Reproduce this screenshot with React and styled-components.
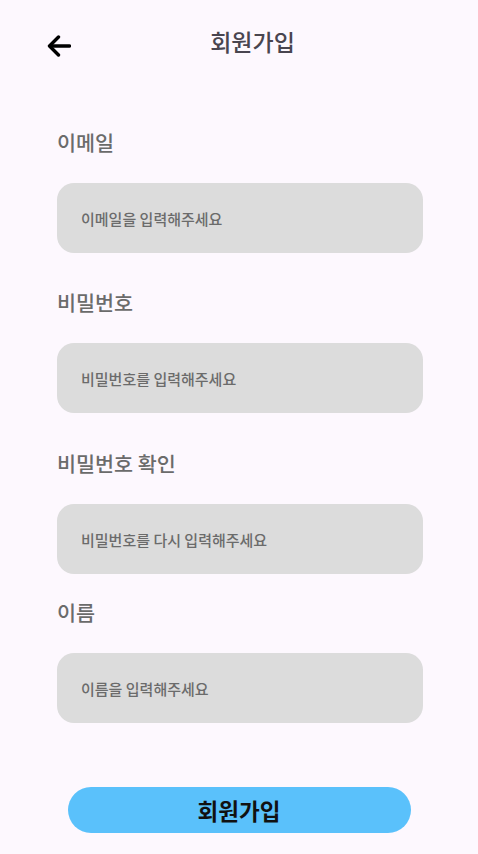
import React from 'react';
import styled, { createGlobalStyle } from 'styled-components';

const GlobalStyle = createGlobalStyle`
  html, body {
    margin: 0;
    padding: 0;
    background: #fdf8fe;
  }
  body {
    font-family: "Noto Sans CJK KR", "Noto Sans", sans-serif;
  }
`;

const Screen = styled.div`
  width: 478px;
  min-height: 854px;
  background: #fdf8fe;
  display: flex;
  flex-direction: column;
`;

const Header = styled.header`
  display: flex;
  align-items: center;
  height: 48px;
  padding: 17px 44px 0 47px;
`;

const BackButton = styled.button`
  width: 24px;
  height: 24px;
  padding: 0;
  border: none;
  background: none;
  display: flex;
  align-items: center;
  margin-top: 10px;
  cursor: pointer;
`;

const Title = styled.h1`
  flex: 1;
  margin: 0;
  text-align: center;
  font-size: 23px;
  font-weight: 500;
  color: #49454f;
  line-height: 28px;
`;

const Form = styled.form`
  display: flex;
  flex-direction: column;
  padding: 0 55px 0 57px;
  margin-top: 63px;
`;

const Field = styled.div`
  display: flex;
  flex-direction: column;
  margin-top: ${(p) => p.$gap}px;
`;

const Label = styled.label`
  font-size: 20.7px;
  font-weight: 500;
  color: #6b6b6b;
  line-height: 28px;
  margin-bottom: 27px;
`;

const Input = styled.input`
  height: 70px;
  box-sizing: border-box;
  border: none;
  border-radius: 17px;
  background: #dcdcdc;
  padding: 0 24px;
  font-family: inherit;
  font-size: 15px;
  font-weight: 500;
  color: #333;
  outline: none;

  &::placeholder {
    color: #6b6b6b;
  }
`;

const Footer = styled.div`
  display: flex;
  justify-content: center;
  padding: 64px 0 0 0;
`;

const SubmitButton = styled.button`
  width: 343px;
  height: 46px;
  border: none;
  border-radius: 23px;
  background: #5ac1fb;
  color: #111;
  font-family: inherit;
  font-size: 22.5px;
  font-weight: 700;
  cursor: pointer;
`;

const BackArrow = () => (
  <svg width="24" height="22" viewBox="0 0 24 22" fill="none">
    <path d="M22.5 11H3.5" stroke="#000" strokeWidth="3.4" strokeLinecap="round" />
    <path d="M11.5 2L2.5 11L11.5 20" stroke="#000" strokeWidth="3.4" strokeLinecap="round" strokeLinejoin="round" />
  </svg>
);

const fields = [
  { id: 'email', label: '이메일', placeholder: '이메일을 입력해주세요', type: 'email', gap: 0 },
  { id: 'pw', label: '비밀번호', placeholder: '비밀번호를 입력해주세요', type: 'password', gap: 35 },
  { id: 'pw2', label: '비밀번호 확인', placeholder: '비밀번호를 다시 입력해주세요', type: 'password', gap: 36 },
  { id: 'name', label: '이름', placeholder: '이름을 입력해주세요', type: 'text', gap: 24 },
];

export default function App() {
  return (
    <>
      <GlobalStyle />
      <Screen>
        <Header>
          <BackButton aria-label="뒤로가기">
            <BackArrow />
          </BackButton>
          <Title>회원가입</Title>
        </Header>
        <Form onSubmit={(e) => e.preventDefault()}>
          {fields.map((f) => (
            <Field key={f.id} $gap={f.gap}>
              <Label htmlFor={f.id}>{f.label}</Label>
              <Input id={f.id} type={f.type} placeholder={f.placeholder} />
            </Field>
          ))}
        </Form>
        <Footer>
          <SubmitButton type="button">회원가입</SubmitButton>
        </Footer>
      </Screen>
    </>
  );
}
